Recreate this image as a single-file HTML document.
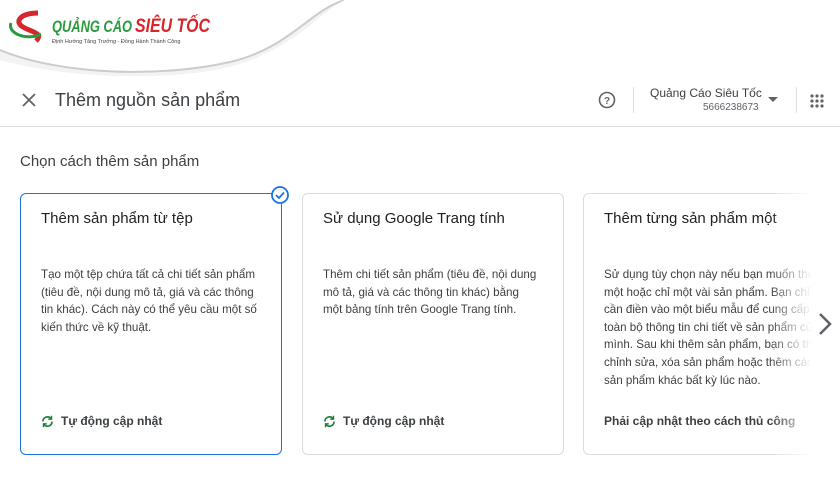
<!DOCTYPE html>
<html><head><meta charset="utf-8"><style>
*{margin:0;padding:0;box-sizing:border-box}
body{width:840px;height:500px;overflow:hidden;background:#fff;font-family:"Liberation Sans",Arial,sans-serif;color:#202124;position:relative}
.a{position:absolute;white-space:nowrap}
.card{position:absolute;top:193px;width:262px;height:262px;border:1px solid #dadce0;border-radius:6px;background:#fff}
.card .t{position:absolute;left:20px;top:16px;font-size:15px;color:#202124}
.card .b{position:absolute;left:20px;top:72px;font-size:11.6px;line-height:17.6px;color:#3c4043;white-space:normal;width:222px}
.card .f{position:absolute;left:20px;top:220px;font-size:12px;color:#3c4043;font-weight:bold;display:flex;align-items:center;gap:7px}
</style></head><body>
<svg class="a" style="left:0;top:0" width="840" height="80">
<rect width="840" height="80" fill="#fff"/>
<path d="M250 0 H840 V80 H0 V50 C60 75 160 78 230 62 C290 48 310 10 345 0 Z" fill="#f3f3f3"/>
<path d="M0 50 C60 75 160 78 230 62 C290 48 310 10 345 0" fill="none" stroke="#ccc" stroke-width="2"/>
<path d="M0 80 V60 C80 82 190 80 240 64 C300 44 320 12 345 0 H840 V80 Z" fill="#fff"/>
<path d="M38 13 C20 13 14 22 23 27 C31 32 44 33 36 41" fill="none" stroke="#d7262b" stroke-width="5"/>
<path d="M11 23 C7 34 28 41 41 34" fill="none" stroke="#2a9a3c" stroke-width="3"/>
<text x="52" y="32" textLength="80" lengthAdjust="spacingAndGlyphs" font-family="Liberation Sans" font-weight="bold" font-style="italic" font-size="17" fill="#2a9a3c">QUẢNG CÁO</text>
<text x="135" y="32" textLength="75" lengthAdjust="spacingAndGlyphs" font-family="Liberation Sans" font-weight="bold" font-style="italic" font-size="19" fill="#d7262b">SIÊU TỐC</text>
<text x="52" y="43" font-family="Liberation Sans" font-size="5.5" fill="#444">Định Hướng Tăng Trưởng - Đồng Hành Thành Công</text>
</svg>
<div class="a" style="left:0;top:126px;width:840px;height:1px;background:#e0e0e0"></div>
<svg class="a" style="left:22px;top:93px" width="14" height="14"><path d="M1 1L13 13M13 1L1 13" stroke="#5f6368" stroke-width="1.8"/></svg>
<div class="a" style="left:55px;top:90px;font-size:18px;color:#3c4043">Thêm nguồn sản phẩm</div>
<svg class="a" style="left:598px;top:91px" width="18" height="18"><circle cx="9" cy="9" r="7.5" fill="none" stroke="#5f6368" stroke-width="1.6"/><text x="9" y="13" text-anchor="middle" font-family="Liberation Sans" font-weight="bold" font-size="10" fill="#5f6368">?</text></svg>
<div class="a" style="left:633px;top:87px;width:1px;height:26px;background:#e0e0e0"></div>
<div class="a" style="left:650px;top:86px;font-size:12px;color:#3c4043">Quảng Cáo Siêu Tốc</div>
<div class="a" style="left:703px;top:102px;font-size:10px;color:#5f6368">5666238673</div>
<svg class="a" style="left:768px;top:97px" width="10" height="6"><path d="M0 0H10L5 5Z" fill="#5f6368"/></svg>
<div class="a" style="left:796px;top:87px;width:1px;height:26px;background:#e0e0e0"></div>
<svg class="a" style="left:810px;top:94px" width="14" height="14" fill="#5f6368"><circle cx="2" cy="2" r="1.6"/><circle cx="7" cy="2" r="1.6"/><circle cx="12" cy="2" r="1.6"/><circle cx="2" cy="7" r="1.6"/><circle cx="7" cy="7" r="1.6"/><circle cx="12" cy="7" r="1.6"/><circle cx="2" cy="12" r="1.6"/><circle cx="7" cy="12" r="1.6"/><circle cx="12" cy="12" r="1.6"/></svg>
<div class="a" style="left:20px;top:153px;font-size:15px;color:#3c4043">Chọn cách thêm sản phẩm</div>

<div class="card" style="left:20px;border:1.5px solid #1a73e8">
<div class="t">Thêm sản phẩm từ tệp</div>
<div class="b" style="width:220px">Tạo một tệp chứa tất cả chi tiết sản phẩm (tiêu đề, nội dung mô tả, giá và các thông tin khác). Cách này có thể yêu cầu một số kiến thức về kỹ thuật.</div>
<div class="f"><svg width="13" height="13" viewBox="0 0 13 13"><path d="M2 6.5A4.5 4.5 0 0 1 10 3.5M11 6.5A4.5 4.5 0 0 1 3 9.5" fill="none" stroke="#188038" stroke-width="1.6"/><path d="M10.5 0.8V4.2H7.2M2.5 12.2V8.8H5.8" fill="none" stroke="#188038" stroke-width="1.4"/></svg>Tự động cập nhật</div>
</div>
<svg class="a" style="left:270px;top:185px" width="20" height="20"><circle cx="10" cy="10" r="8" fill="#fff" stroke="#1a73e8" stroke-width="1.8"/><path d="M6 10.2L9 13L14 7.5" fill="none" stroke="#1a73e8" stroke-width="1.8"/></svg>

<div class="card" style="left:302px">
<div class="t">Sử dụng Google Trang tính</div>
<div class="b" style="width:214px">Thêm chi tiết sản phẩm (tiêu đề, nội dung mô tả, giá và các thông tin khác) bằng một bảng tính trên Google Trang tính.</div>
<div class="f"><svg width="13" height="13" viewBox="0 0 13 13"><path d="M2 6.5A4.5 4.5 0 0 1 10 3.5M11 6.5A4.5 4.5 0 0 1 3 9.5" fill="none" stroke="#188038" stroke-width="1.6"/><path d="M10.5 0.8V4.2H7.2M2.5 12.2V8.8H5.8" fill="none" stroke="#188038" stroke-width="1.4"/></svg>Tự động cập nhật</div>
</div>

<div class="card" style="left:583px;width:280px">
<div class="t">Thêm từng sản phẩm một</div>
<div class="b">Sử dụng tùy chọn này nếu bạn muốn thêm một hoặc chỉ một vài sản phẩm. Bạn chỉ cần điền vào một biểu mẫu để cung cấp toàn bộ thông tin chi tiết về sản phẩm của mình. Sau khi thêm sản phẩm, bạn có thể chỉnh sửa, xóa sản phẩm hoặc thêm các sản phẩm khác bất kỳ lúc nào.</div>
<div class="f">Phải cập nhật theo cách thủ công</div>
</div>
<div class="a" style="left:770px;top:190px;width:70px;height:270px;background:linear-gradient(90deg,rgba(255,255,255,0),#fff 60%)"></div>
<svg class="a" style="left:818px;top:312px" width="14" height="24"><path d="M2 2L12 12L2 22" fill="none" stroke="#5f6368" stroke-width="2.5"/></svg>
</body></html>
